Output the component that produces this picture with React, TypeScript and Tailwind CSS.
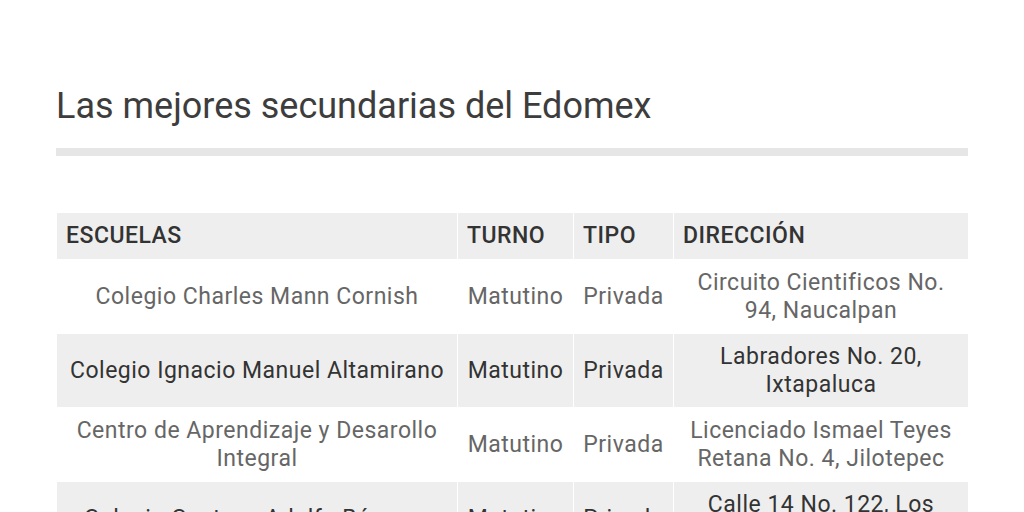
const rows = [
  ["Colegio Charles Mann Cornish", "Matutino", "Privada", "Circuito Cientificos No. 94, Naucalpan"],
  ["Colegio Ignacio Manuel Altamirano", "Matutino", "Privada", "Labradores No. 20, Ixtapaluca"],
  ["Centro de Aprendizaje y Desarollo Integral", "Matutino", "Privada", "Licenciado Ismael Teyes Retana No. 4, Jilotepec"],
  ["Colegio Gustavo Adolfo Bécquer", "Matutino", "Privada", "Calle 14 No. 122, Los Reyes Acaquilpan"],
];

export default function App() {
  return (
    <div className="h-[512px] w-[1024px] overflow-hidden bg-white px-[56px] font-['Roboto',sans-serif]">
      <h1 className="pt-[83px] text-[36px] leading-[46px] font-normal text-[#3d3d3d]">
        Las mejores secundarias del Edomex
      </h1>
      <div className="mt-[19px] h-[8px] w-[912px] bg-[#e6e6e6]" />

      <div className="mt-[57px] ml-px grid w-[911px] grid-cols-[400px_115px_99px_294px] gap-px bg-white">
        {["ESCUELAS", "TURNO", "TIPO", "DIRECCIÓN"].map((h) => (
          <div
            key={h}
            className="flex h-[46px] items-center bg-[#eeeeee] px-[9px] text-[23px] tracking-[0.5px] font-medium text-[#333333]"
          >
            {h}
          </div>
        ))}
        {rows.map((r, i) =>
          r.map((c, j) => (
            <div
              key={i + "-" + j}
              className={
                "flex h-[73px] items-center justify-center px-[9px] text-center text-[23px] leading-[28px] tracking-[0.5px] " +
                (i % 2 === 1 ? "bg-[#eeeeee] text-[#333333]" : "bg-white text-[#666666]")
              }
            >
              {c}
            </div>
          ))
        )}
      </div>
    </div>
  );
}
